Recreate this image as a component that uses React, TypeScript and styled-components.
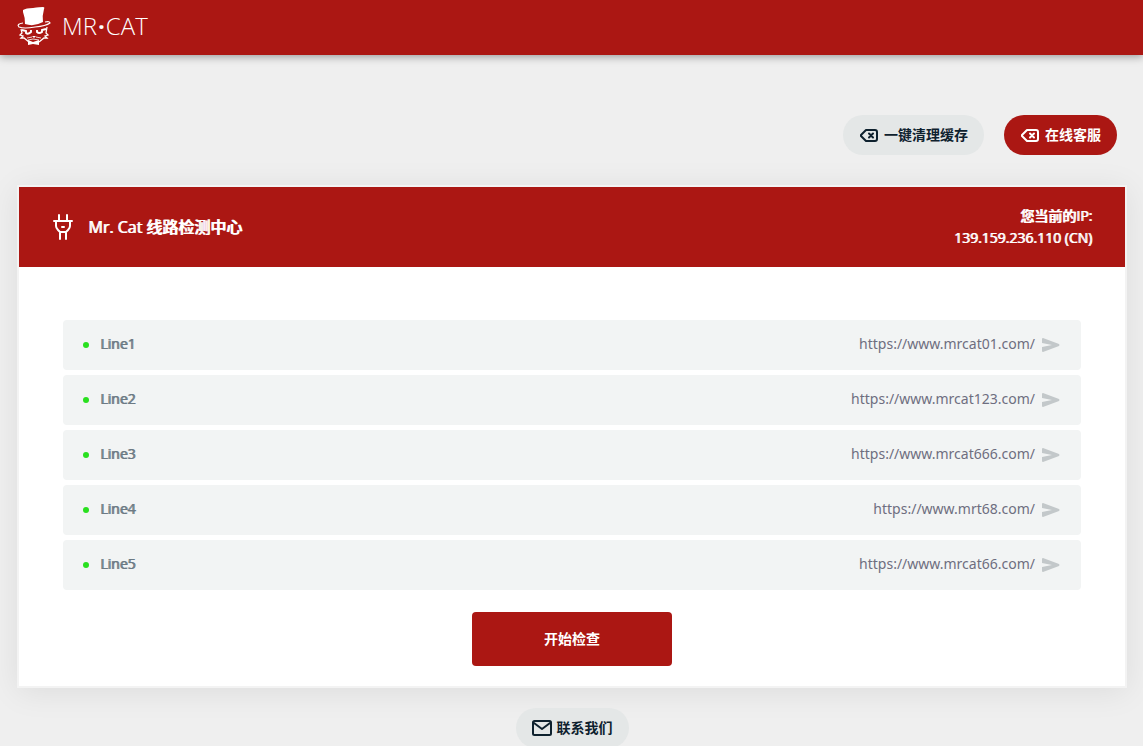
import React from 'react';
import styled, { createGlobalStyle } from 'styled-components';

const red = '#ab1713';
const ink = '#0e212e';

const GlobalStyle = createGlobalStyle`
  * { box-sizing: border-box; }
  html { scrollbar-width: none; }
  body {
    margin: 0;
    background: #efefef;
    color: ${ink};
    font-family: "Open Sans", "Noto Sans CJK SC", sans-serif;
    font-size: 14px;
    line-height: 22px;
  }
`;

const Header = styled.header`
  display: flex;
  align-items: center;
  height: 55px;
  padding: 0 16px 4px;
  background: ${red};
  box-shadow: 0 2px 8px rgba(0, 0, 0, 0.35);
`;

const Brand = styled.a`
  display: flex;
  align-items: center;
  gap: 10px;
  color: #fff;
  font-size: 24px;
  font-weight: 300;
  line-height: 32px;
  text-decoration: none;
`;

const BrandDot = styled.span`
  margin: 0 1px;
  font-weight: 700;
`;

const Main = styled.main`
  padding: 60px 16px 0 17px;
`;

const Actions = styled.div`
  display: flex;
  justify-content: flex-end;
  gap: 20px;
  padding-right: 10px;
`;

const Pill = styled.button<{ $primary?: boolean }>`
  display: inline-flex;
  align-items: center;
  gap: 5px;
  height: 40px;
  padding: 0 16px;
  border: 0;
  border-radius: 20px;
  background: ${(p) => (p.$primary ? red : '#e4e7e7')};
  color: ${(p) => (p.$primary ? '#fff' : ink)};
  font: inherit;
  font-weight: 700;
  cursor: pointer;
`;

const Card = styled.section`
  margin-top: 30px;
  border: 2px solid #f3f3f3;
  background: #fff;
  box-shadow: 0 4px 30px rgba(0, 0, 0, 0.08);
`;

const CardHeader = styled.div`
  display: flex;
  align-items: center;
  justify-content: space-between;
  min-height: 80px;
  padding: 0 33px 0 32px;
  background: ${red};
  color: #fff;
  text-shadow: 1px 0 0 currentColor;
`;

const Title = styled.h1`
  display: flex;
  align-items: center;
  gap: 13px;
  margin: 0;
  font-size: 16px;
  font-weight: 500;
`;

const Address = styled.p`
  margin: 0;
  font-weight: 500;
  text-align: right;
`;

const CardBody = styled.div`
  display: flex;
  flex-direction: column;
  align-items: center;
  gap: 22px;
  padding: 53px 44px 20px;
`;

const Lines = styled.ul`
  display: flex;
  flex-direction: column;
  gap: 5px;
  width: 100%;
  margin: 0;
  padding: 0;
  list-style: none;
`;

const Line = styled.li`
  display: flex;
  align-items: center;
  height: 50px;
  padding: 0 21px 0 20px;
  border-radius: 4px;
  background: #f2f4f4;
`;

const Dot = styled.span`
  width: 6px;
  height: 6px;
  border-radius: 50%;
  background: #29e01f;
`;

const LineName = styled.span`
  margin-left: 11px;
  padding-bottom: 2px;
  color: #6c7a84;
  font-weight: 400;
  text-shadow: 1px 0 0 currentColor;
`;

const LineLink = styled.a`
  display: flex;
  align-items: center;
  gap: 7px;
  margin-left: auto;
  color: #6e6e80;
  font-family: "Noto Sans", "Open Sans", sans-serif;
  text-decoration: none;
`;

const LineUrl = styled.span`
  padding-bottom: 2px;
`;

const CheckButton = styled.button`
  width: 200px;
  height: 54px;
  border: 0;
  border-radius: 4px;
  background: ${red};
  color: #fff;
  font: inherit;
  font-weight: 700;
  cursor: pointer;
`;

const Footer = styled.footer`
  display: flex;
  justify-content: center;
  padding-top: 20px;
`;

const CatLogo = () => (
  <svg width="36" height="38" viewBox="0 0 36 38" fill="none" aria-hidden="true">
    <path d="M7 3Q10 1 17 1Q24 0 27 0Q29 0 28 2Q26 9 27 15Q18 20 9 17Q9 10 7 5Z" fill="#fff" />
    <path d="M7 16Q0 17 3 20Q8 22 19 20Q30 19 34 16Q34 14 29 15" stroke="#fff" strokeWidth="1.2" />
    <path d="M5 22L6 26L4 28L7 29L5 31L8 31L13 35M31 20L30 26L32 28L29 29L31 31L28 31L23 35" stroke="#fff" strokeWidth="1.3" />
    <path d="M6 23L10 24V26Q12 28 15 25V23M30 22L26 23V25Q23 27 21 25V23" stroke="#fff" strokeWidth="1.9" />
    <path d="M16 29H20L18 31Z" fill="#fff" />
    <path d="M11 31L16 30M25 31L20 30M12 33L17 32L23 33" stroke="#fff" strokeWidth="0.8" />
    <path d="M12 33L17 35L23 33V38L17 37L12 38Z" fill="#fff" />
  </svg>
);

const PlugIcon = () => (
  <svg width="24" height="26" viewBox="0 0 24 26" fill="none" stroke="#fff" strokeWidth="2" strokeLinecap="round" strokeLinejoin="round" aria-hidden="true">
    <path d="M3 7H21M8 1V7M16 1V7M5 7V12Q5 14 7 16L9 18H15L17 16Q19 14 19 12V7M11 13H13M9 18V25M15 18V25" />
  </svg>
);

const DeleteIcon = () => (
  <svg width="20" height="20" viewBox="0 0 20 20" fill="none" stroke="currentColor" strokeWidth="2" strokeLinecap="round" strokeLinejoin="round" aria-hidden="true">
    <path d="M7 5H16Q18 5 18 7V14Q18 16 16 16H7L2 11V10Z" />
    <path d="M10 8.5L14 12.5M14 8.5L10 12.5" />
  </svg>
);

const MailIcon = () => (
  <svg width="20" height="20" viewBox="0 0 20 20" fill="none" stroke="currentColor" strokeWidth="2" strokeLinecap="round" strokeLinejoin="round" aria-hidden="true">
    <rect x="1" y="3" width="18" height="14" rx="1.5" />
    <path d="M2 5L10 11L18 5" />
  </svg>
);

const SendIcon = () => (
  <svg width="18" height="16" viewBox="0 0 18 16" fill="#c3c8ca" aria-hidden="true">
    <path d="M1 1L17 7Q18 8 17 9L1 15Q0 15 0 14V10L10 8L0 6V2Q0 1 1 1Z" />
  </svg>
);

const lines = [
  'https://www.mrcat01.com/',
  'https://www.mrcat123.com/',
  'https://www.mrcat666.com/',
  'https://www.mrt68.com/',
  'https://www.mrcat66.com/',
];

export default function App() {
  return (
    <>
      <GlobalStyle />
      <Header>
        <Brand href="#"><CatLogo /><span>MR<BrandDot>·</BrandDot>CAT</span></Brand>
      </Header>
      <Main>
        <Actions>
          <Pill type="button"><DeleteIcon />一键清理缓存</Pill>
          <Pill type="button" $primary><DeleteIcon />在线客服</Pill>
        </Actions>
        <Card>
          <CardHeader>
            <Title><PlugIcon />Mr. Cat 线路检测中心</Title>
            <Address>您当前的IP:<br />139.159.236.110 (CN)</Address>
          </CardHeader>
          <CardBody>
            <Lines>
              {lines.map((url, i) => (
                <Line key={url}>
                  <Dot />
                  <LineName>Line{i + 1}</LineName>
                  <LineLink href={url}><LineUrl>{url}</LineUrl><SendIcon /></LineLink>
                </Line>
              ))}
            </Lines>
            <CheckButton type="button">开始检查</CheckButton>
          </CardBody>
        </Card>
        <Footer>
          <Pill type="button"><MailIcon />联系我们</Pill>
        </Footer>
      </Main>
    </>
  );
}
